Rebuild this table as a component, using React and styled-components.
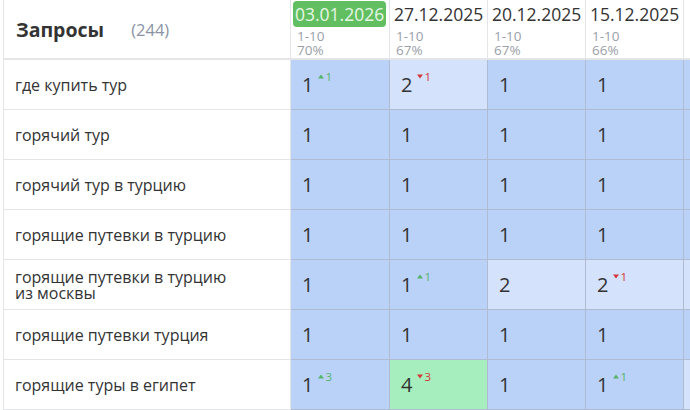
import React from 'react';
import styled, { createGlobalStyle } from 'styled-components';

const GlobalStyle = createGlobalStyle`
    body {
        margin: 0;
        background: #fff;
        font-family: "Open Sans", "Noto Sans", sans-serif;
        color: #333;
        overflow: hidden;
    }
`;

const Table = styled.div`
    margin-left: 3px;
    border-left: 1px solid #e3e5e8;
    width: 687px;
    overflow: hidden;
`;

const Row = styled.div`
    display: grid;
    grid-template-columns: 287px 99px 98px 98px 98px 98px;
    height: ${p => p.head ? '60px' : '50px'};
`;

const QueryHead = styled.div`
    display: flex;
    align-items: center;
    padding-left: 12px;
    border-right: 1px solid #e3e5e8;
    border-bottom: 2px solid #e3e5e8;
`;

const Title = styled.span`
    font-size: 19.5px;
    font-weight: 700;
    color: #333;
`;

const Count = styled.span`
    margin-left: 27px;
    font-size: 16.5px;
    color: #8a93a3;
`;

const DateHead = styled.div`
    display: flex;
    flex-direction: column;
    border-right: 1px solid #e3e5e8;
    border-bottom: 2px solid #e3e5e8;
    padding-top: 1px;
`;

const DateLabel = styled.span`
    align-self: flex-start;
    margin-left: 2px;
    padding: 0 2px;
    border-radius: 4px;
    font-size: 17.5px;
    line-height: 26px;
    white-space: nowrap;
    background: ${p => p.active ? '#62bf61' : 'transparent'};
    color: ${p => p.active ? '#e6f7e4' : '#333'};
`;

const MetaGroup = styled.div`
    display: flex;
    flex-direction: column;
    margin-top: 3px;
    padding-left: 6px;
`;

const Meta = styled.span`
    font-size: 13.5px;
    line-height: 13.5px;
    color: #9aa0a8;
`;

const QueryCell = styled.div`
    display: flex;
    align-items: center;
    padding-left: 11px;
    border-right: 1px solid #e3e5e8;
    border-bottom: 1px solid #e3e5e8;
    font-size: 16px;
`;

const QueryText = styled.span`
    max-width: 218px;
    line-height: 16px;
`;

const bg = {
    base: '#bbd2f8',
    light: '#d4e2fb',
    green: '#a6eebd',
};

const Cell = styled.div`
    display: flex;
    align-items: center;
    padding-left: 11px;
    background: ${p => bg[p.tone]};
    border-right: 1px solid #aebbd1;
    border-bottom: 1px solid #aebbd1;
    font-size: 20px;
    color: #333;
`;

const Delta = styled.span`
    display: inline-flex;
    align-items: center;
    gap: 1px;
    margin-left: 5px;
    margin-top: -16px;
    font-size: 11.5px;
    color: ${p => p.up ? '#56b46a' : '#d6363a'};
`;

const Arrow = ({ up }) => (
    <svg width="6" height="5" viewBox="0 0 6 5">
        {up
            ? <polygon points="3,0.5 6,4.5 0,4.5" fill="currentColor" />
            : <polygon points="0,0.5 6,0.5 3,4.5" fill="currentColor" />}
    </svg>
);

const dates = [
    { date: '03.01.2026', pct: '70%', active: true },
    { date: '27.12.2025', pct: '67%' },
    { date: '20.12.2025', pct: '67%' },
    { date: '15.12.2025', pct: '66%' },
];

// [value, tone, delta] ; delta > 0 up, < 0 down
const rows = [
    { q: 'где купить тур', cells: [[1, 'base', 1], [2, 'light', -1], [1, 'base'], [1, 'base']], edge: 'base' },
    { q: 'горячий тур', cells: [[1, 'base'], [1, 'base'], [1, 'base'], [1, 'base']], edge: 'base' },
    { q: 'горячий тур в турцию', cells: [[1, 'base'], [1, 'base'], [1, 'base'], [1, 'base']], edge: 'base' },
    { q: 'горящие путевки в турцию', cells: [[1, 'base'], [1, 'base'], [1, 'base'], [1, 'base']], edge: 'base' },
    { q: 'горящие путевки в турцию из москвы', cells: [[1, 'base'], [1, 'base', 1], [2, 'light'], [2, 'light', -1]], edge: 'light' },
    { q: 'горящие путевки турция', cells: [[1, 'base'], [1, 'base'], [1, 'base'], [1, 'base']], edge: 'base' },
    { q: 'горящие туры в египет', cells: [[1, 'base', 3], [4, 'green', -3], [1, 'base'], [1, 'base', 1]], edge: 'light' },
];

const App = () => (
    <>
        <GlobalStyle />
        <Table>
            <Row head>
                <QueryHead>
                    <Title>Запросы</Title>
                    <Count>(244)</Count>
                </QueryHead>
                {dates.map(d => (
                    <DateHead key={d.date}>
                        <DateLabel active={d.active}>{d.date}</DateLabel>
                        <MetaGroup>
                            <Meta>1-10</Meta>
                            <Meta>{d.pct}</Meta>
                        </MetaGroup>
                    </DateHead>
                ))}
                <DateHead />
            </Row>
            {rows.map(r => (
                <Row key={r.q}>
                    <QueryCell><QueryText>{r.q}</QueryText></QueryCell>
                    {r.cells.map(([v, tone, delta], i) => (
                        <Cell key={i} tone={tone}>
                            {v}
                            {delta ? (
                                <Delta up={delta > 0}>
                                    <Arrow up={delta > 0} />
                                    {Math.abs(delta)}
                                </Delta>
                            ) : null}
                        </Cell>
                    ))}
                    <Cell tone={r.edge} />
                </Row>
            ))}
        </Table>
    </>
);

export default App;
